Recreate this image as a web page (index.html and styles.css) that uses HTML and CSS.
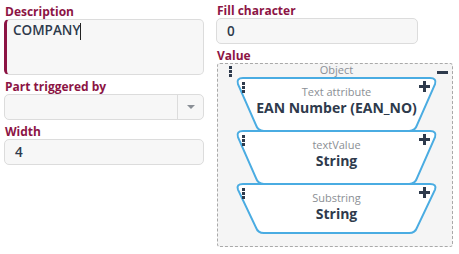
FILE: index.html
```html
<!DOCTYPE html>
<html lang="en">
<head>
  <meta charset="UTF-8">
  <title>Part editor</title>
  <link rel="stylesheet" href="styles.css">
</head>
<body>
<div class="editor">

  <div class="col">
    <div class="label">Description</div>
    <div class="field area"><span class="val">COMPANY</span><span class="caret"></span></div>

    <div class="label">Part triggered by</div>
    <div class="field select">
      <div class="select-val"></div>
      <div class="select-btn"><span class="arrow"></span></div>
    </div>

    <div class="label">Width</div>
    <div class="field"><span class="val">4</span></div>
  </div>

  <div class="col">
    <div class="label">Fill character</div>
    <div class="field short"><span class="val">0</span></div>

    <div class="label">Value</div>
    <div class="obj">
      <div class="obj-head">
        <span class="grip"><i></i><i></i><i></i></span>
        <span class="obj-title">Object</span>
        <span class="minus"></span>
      </div>

      <div class="stack">
        <div class="block">
          <svg class="shape" viewBox="0 0 204 54" preserveAspectRatio="none"><path d="M8 1H196Q203 1 201 7L183 47Q181 53 175 53H29Q23 53 21 47L3 7Q1 1 8 1Z"/></svg>
          <span class="grip"><i></i><i></i><i></i></span>
          <span class="plus"></span>
          <div class="b-kind">Text attribute</div>
          <div class="b-name">EAN Number (EAN_NO)</div>
        </div>
        <div class="block">
          <svg class="shape" viewBox="0 0 204 54" preserveAspectRatio="none"><path d="M8 1H196Q203 1 201 7L183 47Q181 53 175 53H29Q23 53 21 47L3 7Q1 1 8 1Z"/></svg>
          <span class="grip"><i></i><i></i><i></i></span>
          <span class="plus"></span>
          <div class="b-kind">textValue</div>
          <div class="b-name">String</div>
        </div>
        <div class="block">
          <svg class="shape" viewBox="0 0 204 54" preserveAspectRatio="none"><path d="M8 1H196Q203 1 201 7L183 47Q181 53 175 53H29Q23 53 21 47L3 7Q1 1 8 1Z"/></svg>
          <span class="grip"><i></i><i></i><i></i></span>
          <span class="plus"></span>
          <div class="b-kind">Substring</div>
          <div class="b-name">String</div>
        </div>
      </div>
    </div>
  </div>

</div>
</body>
</html>
```

FILE: styles.css
```css
:root{
  --label:#8c1444;
  --text:#2e3a4c;
  --muted:#8b8f95;
  --line:#dcdcdc;
  --blue:#4aace2;
}

*{ box-sizing:border-box; }
html,body{
  margin:0; padding:0;
  background:#fff;
  font-family:'Open Sans', sans-serif;
  color:var(--text);
}

.editor{
  display:grid;
  grid-template-columns:200px 236px;
  gap:12px;
  padding:0 4px;
}
.col{ display:flex; flex-direction:column; }

/* ================= FIELDS ================= */
.label{
  font-size:12px;
  font-weight:700;
  color:var(--label);
  line-height:15px;
  padding:4px 0 0 1px;
}
.col:last-child .label:first-child{ margin-top:-1px; }

.field{
  height:26px;
  border:1px solid var(--line);
  border-radius:5px;
  background:#f7f7f7;
  display:flex; align-items:center;
  padding:0 10px;
  font-size:13.5px;
}
.field .val{ font-weight:600; }

.area{
  height:56px;
  align-items:flex-start;
  padding:1px 6px;
  border-left:3px solid var(--label);
}
.caret{
  width:1px; height:17px;
  background:#222;
  margin-top:2px;
}
.short{ width:202px; }

.select{ padding:0; }
.select-val{ flex:1; }
.select-btn{
  width:26px; height:100%;
  border-left:1px solid var(--line);
  display:flex; align-items:center; justify-content:center;
}
.arrow{
  width:0; height:0;
  border-left:4px solid transparent;
  border-right:4px solid transparent;
  border-top:4px solid #8a8f96;
}

/* ================= OBJECT ================= */
.obj{
  border:1px dashed #a9a9a9;
  border-radius:3px;
  background:#f5f5f5;
  padding:0 14px 10px 17px;
  width:236px;
  margin-left:1px;
}
.obj-head{
  position:relative;
  height:13px;
  text-align:center;
}
.obj-title{
  display:block;
  font-size:11px;
  color:var(--muted);
  line-height:12px;
}
.obj-head .grip{ position:absolute; left:-6px; top:2px; }
.minus{
  position:absolute;
  right:-10px; top:7px;
  width:11px; height:3px;
  background:var(--text);
}

.grip{
  display:flex; flex-direction:column; gap:1px;
}
.grip i{
  width:3px; height:3px;
  background:var(--text);
}

.stack{ display:flex; flex-direction:column; }
.block{
  position:relative;
  height:53px;
  text-align:center;
  padding-top:8px;
}
.shape{
  position:absolute; left:0; top:0;
  width:100%; height:55px;
  overflow:visible;
}
.block:last-child .shape{ height:51px; }
.shape path{
  fill:#fff;
  stroke:var(--blue);
  stroke-width:2;
}
.block .grip{ position:absolute; left:7px; top:5px; }
.plus{
  position:absolute;
  right:8px; top:4px;
  width:11px; height:11px;
}
.plus:before, .plus:after{
  content:"";
  position:absolute;
  background:var(--text);
}
.plus:before{ left:0; top:4px; width:11px; height:3px; }
.plus:after{ left:4px; top:0; width:3px; height:11px; }

.b-kind{
  position:relative;
  font-size:11px;
  color:var(--muted);
  line-height:14px;
}
.b-name{
  position:relative;
  font-size:14px;
  font-weight:700;
  color:var(--text);
  line-height:18px;
}
```
